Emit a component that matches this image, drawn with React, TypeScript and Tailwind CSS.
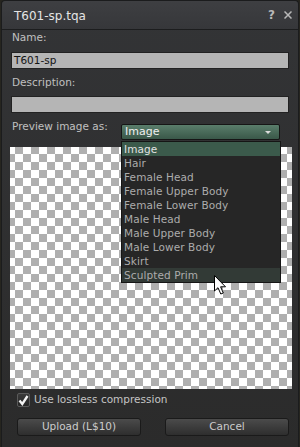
import React from "react";

const items = [
  "Image",
  "Hair",
  "Female Head",
  "Female Upper Body",
  "Female Lower Body",
  "Male Head",
  "Male Upper Body",
  "Male Lower Body",
  "Skirt",
  "Sculpted Prim",
];

export default function App() {
  return (
    <div
      className="w-[300px] h-[447px] bg-[#26251f] overflow-hidden"
      style={{ fontFamily: '"DejaVu Sans", sans-serif' }}
    >
      <div className="w-[298px] h-[447px] ml-px rounded-t-[4px] bg-gradient-to-b from-[#333436] to-[#2b2b2b] border-x border-t border-[#1b1c1d] flex flex-col">
        {/* Title */}
        <div className="h-[29px] flex items-center pl-[12px] pr-[5px] border-b border-[#1c1d1e] bg-gradient-to-b from-[#3e3f42] to-[#36373a] rounded-t-[4px] shrink-0">
          <span className="text-[12px] text-[#e4e4e4] flex-1 leading-[14px] mt-[1px]">T601-sp.tqa</span>
          <span className="text-[12px] font-bold text-[#b8b8b8] mr-[9px] leading-[14px]">?</span>
          <svg width="8" height="8" viewBox="0 0 8 8" className="mr-[1px]">
            <path d="M0.5 0.5L7.5 7.5M7.5 0.5L0.5 7.5" stroke="#b8b8b8" strokeWidth="1.5" />
          </svg>
        </div>
        <div className="px-[8px] flex flex-col text-[10.5px] text-[#c0c0c0]">
          <div className="h-[14px] leading-[14px] ml-[2px]">Name:</div>
          <div className="mt-[8px] mx-[1px] h-[17px] bg-[#b5b5b5] border border-[#222] text-[#141414] pl-[2px] leading-[15px] text-[10.5px]">
            T601-sp
          </div>
          <div className="mt-[6px] h-[14px] leading-[14px] ml-[2px]">Description:</div>
          <div className="mt-[7px] mx-[1px] h-[17px] bg-[#b5b5b5] border border-[#222]"></div>
          <div className="relative">
            <div className="mt-[6px] h-[14px] leading-[14px] ml-[2px]">Preview image as:</div>
            <div
              className="mt-[14px] h-[242px] w-[282px]"
              style={{
                backgroundImage:
                  "conic-gradient(#afafaf 25%, #ffffff 0 50%, #afafaf 0 75%, #ffffff 0)",
                backgroundSize: "16px 16px",
                backgroundPosition: "-3px -1px",
              }}
            ></div>
            {/* Combo */}
            <div className="absolute left-[111px] top-[11px] w-[159px] h-[16px] rounded-[2px] border border-[#161616] bg-gradient-to-b from-[#5a7e6b] to-[#3a5849] flex items-center pl-[3px] text-[11px] text-[#f0f0f0]">
              <span className="flex-1 leading-[14px]">Image</span>
              <svg width="6" height="3" viewBox="0 0 6 3" className="mr-[8px]">
                <path d="M0 0H6L3 3Z" fill="#dcdcdc" />
              </svg>
            </div>
            {/* List */}
            <div className="absolute left-[111px] top-[28px] w-[160px] bg-[#262626] border border-[#151515] flex flex-col">
              {items.map((it, i) => (
                <div
                  key={it}
                  className={
                    "h-[14px] leading-[14px] pl-[2px] text-[10.5px] tracking-[0.1px] " +
                    (i === 0
                      ? "bg-[#3b5a4b] text-[#e2e2e2]"
                      : i === 9
                      ? "bg-[#323a36] text-[#acacac]"
                      : "text-[#acacac]")
                  }
                >
                  {it}
                </div>
              ))}
            </div>
            {/* cursor */}
            <svg width="13" height="20" viewBox="0 0 13 20" className="absolute left-[204px] top-[162px]">
              <path d="M0.5 0.5V16L4 12.7L6.8 19L9.3 18L6.6 11.8H11.5Z" fill="#ffffff" stroke="#000000" strokeWidth="1" />
            </svg>
          </div>
          <div className="mt-[4px] flex items-center h-[14px]">
            <div className="ml-[7px] w-[13px] h-[14px] rounded-[2px] bg-gradient-to-b from-[#3a3a3a] to-[#262626] border border-[#5a5a5a] flex items-center justify-center">
              <svg width="11" height="11" viewBox="0 0 11 11">
                <path d="M1.5 5.5L4.3 9L9.5 1" stroke="#f4f4f4" strokeWidth="2.3" fill="none" />
              </svg>
            </div>
            <span className="ml-[4px] text-[10.5px] text-[#c4c4c4]">Use lossless compression</span>
          </div>
          <div className="mt-[11px] flex justify-between pl-[7px] pr-[1px]">
            <div className="w-[124px] h-[18px] rounded-[3px] border border-[#1a1a1a] bg-gradient-to-b from-[#4b4b4b] to-[#2e2e2e] flex items-center justify-center text-[10.5px] text-[#cccccc]">
              Upload (L$10)
            </div>
            <div className="w-[124px] h-[18px] rounded-[3px] border border-[#1a1a1a] bg-gradient-to-b from-[#4b4b4b] to-[#2e2e2e] flex items-center justify-center text-[10.5px] text-[#cccccc]">
              Cancel
            </div>
          </div>
        </div>
      </div>
    </div>
  );
}
